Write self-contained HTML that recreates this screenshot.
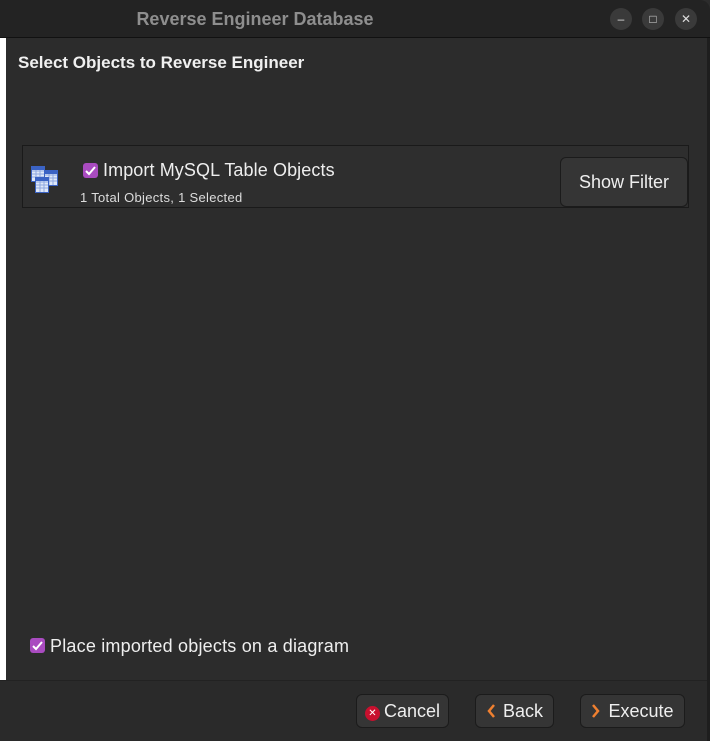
<!DOCTYPE html>
<html><head><style>
*{margin:0;padding:0;box-sizing:border-box}
body{width:710px;height:741px;background:#2c2c2c;font-family:"Liberation Sans",sans-serif;position:relative;overflow:hidden;color:#eee}
.title{position:absolute;left:0;top:0;width:710px;height:38px;background:#232323;border-bottom:1px solid #111;border-top-right-radius:10px}
.title .t{position:absolute;left:0;width:510px;top:9px;text-align:center;font-size:18px;font-weight:bold;color:#8e8e8e}
.wb{position:absolute;top:8px;width:22px;height:22px;border-radius:50%;background:#3a3a3a;color:#ddd;font-size:12px;text-align:center;line-height:22px}
.strip{position:absolute;left:0;top:38px;width:6px;height:642px;background:#fff}
.main{position:absolute;left:6px;top:38px;width:702px;height:642px;background:#2c2c2c}
.edge{position:absolute;left:707px;top:38px;width:3px;height:703px;background:#1e1e1e}
h1{position:absolute;left:18px;top:53px;font-size:17px;font-weight:bold;color:#f0f0f0}
.box{position:absolute;left:22px;top:145px;width:667px;height:63px;border:1px solid #1a1a1a;background:#2e2e2e}
.cb{position:absolute;width:15px;height:15px;background:#a94bc0;border-radius:3px}
.cb svg{position:absolute;left:1px;top:1px}
.btn{position:absolute;background:#353535;border:1px solid #1b1b1b;border-radius:6px;color:#eee;font-size:18px;text-align:center}
.bottom{position:absolute;left:0;top:680px;width:707px;height:61px;background:#2a2a2a;border-top:1px solid #222}
</style></head><body>
<div class="title"><div class="t">Reverse Engineer Database</div>
<div class="wb" style="left:610px">–</div><div class="wb" style="left:642px">□</div><div class="wb" style="left:675px">✕</div></div>
<div class="strip"></div>
<div class="main"></div>
<h1>Select Objects to Reverse Engineer</h1>
<div class="box">
<svg style="position:absolute;left:7px;top:19px" width="32" height="32" viewBox="0 0 32 32">
<g stroke="#3b63c4" stroke-width="1"><rect x="1.5" y="1.5" width="13" height="15" fill="#dfe8f8"/><path d="M2 6h12M2 9h12M2 12h12M6 2v14M10 2v14" stroke="#8fa8e0"/><rect x="1.5" y="1.5" width="13" height="3" fill="#3b63c4"/>
<rect x="14.5" y="5.5" width="13" height="15" fill="#dfe8f8"/><path d="M15 10h12M15 13h12M15 16h12M19 6v14M23 6v14" stroke="#8fa8e0"/><rect x="14.5" y="5.5" width="13" height="3" fill="#3b63c4"/>
<rect x="5.5" y="12.5" width="13" height="15" fill="#dfe8f8"/><path d="M6 17h12M6 20h12M6 23h12M10 13v14M14 13v14" stroke="#8fa8e0"/><rect x="5.5" y="12.5" width="13" height="3" fill="#3b63c4"/></g>
</svg>
<div class="cb" style="left:60px;top:17px"><svg width="13" height="13"><path d="M2 7l3 3 6-7" stroke="#fff" stroke-width="2" fill="none"/></svg></div>
<div style="position:absolute;left:80px;top:14px;font-size:18px;color:#eee;letter-spacing:0.1px">Import MySQL Table Objects</div>
<div style="position:absolute;left:57px;top:44px;font-size:13px;color:#ddd;letter-spacing:0.3px">1 Total Objects, 1 Selected</div>
<div class="btn" style="left:537px;top:11px;width:128px;height:50px;line-height:48px">Show Filter</div>
</div>
<div class="cb" style="left:30px;top:638px"><svg width="13" height="13"><path d="M2 7l3 3 6-7" stroke="#fff" stroke-width="2" fill="none"/></svg></div>
<div style="position:absolute;left:50px;top:636px;font-size:18px;color:#eee;letter-spacing:0.2px">Place imported objects on a diagram</div>
<div class="bottom">
<div class="btn" style="left:356px;top:13px;width:93px;height:34px;line-height:32px"><span style="display:inline-block;width:15px;height:15px;border-radius:50%;background:#c8102e;color:#fff;font-size:10px;line-height:15px;vertical-align:1px;margin-right:4px">✕</span>Cancel</div>
<div class="btn" style="left:475px;top:13px;width:79px;height:34px;line-height:32px"><svg width="10" height="14" style="vertical-align:-1px;margin-right:7px"><path d="M8 1L3 7l5 6" stroke="#f08030" stroke-width="2.5" fill="none"/></svg>Back</div>
<div class="btn" style="left:580px;top:13px;width:105px;height:34px;line-height:32px"><svg width="10" height="14" style="vertical-align:-1px;margin-right:7px"><path d="M2 1l5 6-5 6" stroke="#f08030" stroke-width="2.5" fill="none"/></svg>Execute</div>
</div>
<div class="edge"></div>
</body></html>
